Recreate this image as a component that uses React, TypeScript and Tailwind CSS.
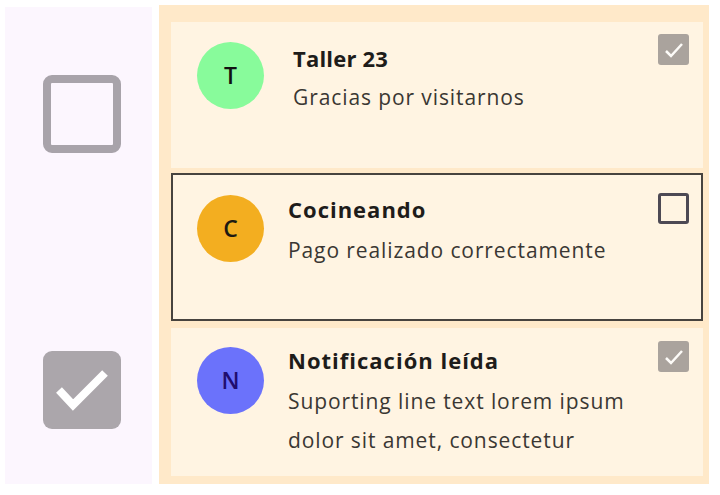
import React from "react";

const font = { fontFamily: '"Open Sans", "Noto Sans", sans-serif' };

function SmallCheck({ checked }: { checked: boolean }) {
  if (checked) {
    return (
      <div className="w-[31px] h-[31px] rounded-[3px] bg-[#aaa39d] flex items-center justify-center shrink-0">
        <svg width="31" height="31" viewBox="0 0 31 31">
          <path d="M8 17 L13 22 L24 10" fill="none" stroke="#fdfbf8" strokeWidth="2.5" />
        </svg>
      </div>
    );
  }
  return <div className="w-[31px] h-[31px] rounded-[3px] border-[3px] border-[#4d4954] shrink-0" />;
}

type Item = {
  letter: string;
  bg: string;
  fg: string;
  title: string;
  lines: string[];
  checked: boolean;
  selected?: boolean;
};

function Card({
  item,
  h,
  textPl,
  pt,
  checkMt,
  titleCls,
}: {
  item: Item;
  h: string;
  textPl: string;
  pt: string;
  checkMt: string;
  titleCls: string;
}) {
  return (
    <div
      className={`${h} bg-[#fff4e2] flex items-start ${pt} ${
        item.selected ? "border-2 border-[#47433e] pl-[24px] pr-[12px]" : "pl-[26px] pr-[14px]"
      }`}
    >
      <div
        className="w-[67px] h-[67px] rounded-full flex items-center justify-center shrink-0 text-[23px] font-semibold"
        style={{ backgroundColor: item.bg, color: item.fg }}
      >
        {item.letter}
      </div>
      <div className={`flex-1 ${textPl} -mt-[4px]`}>
        <div className={`text-[#1e1c1a] leading-[40px] ${titleCls}`}>{item.title}</div>
        {item.lines.map((l) => (
          <div key={l} className="text-[21px] tracking-[0.9px] text-[#3a3733] leading-[39px]">
            {l}
          </div>
        ))}
      </div>
      <div className={checkMt}>
        <SmallCheck checked={item.checked} />
      </div>
    </div>
  );
}

export default function App() {
  const items: Item[] = [
    { letter: "T", bg: "#88fb9b", fg: "#111", title: "Taller 23", lines: ["Gracias por visitarnos"], checked: true },
    { letter: "C", bg: "#f3ae20", fg: "#1d1a12", title: "Cocineando", lines: ["Pago realizado correctamente"], checked: false, selected: true },
    { letter: "N", bg: "#6b72fb", fg: "#200d6e", title: "Notificación leída", lines: ["Suporting line text lorem ipsum", "dolor sit amet, consectetur"], checked: true },
  ];
  return (
    <div className="w-[720px] h-[495px] bg-white flex pl-[5px] pt-[5px] gap-[7px]" style={font}>
      <div className="w-[147px] h-[477px] mt-[2px] bg-[#fcf6fe] flex flex-col pl-[38px] pt-[68px]">
        <div className="w-[78px] h-[78px] rounded-[9px] border-[8px] border-[#a8a3aa]" />
        <div className="w-[78px] h-[78px] rounded-[9px] bg-[#aba6ab] mt-[198px]">
          <svg width="78" height="78" viewBox="0 0 78 78">
            <path d="M16 39 L30 54 L62 22" fill="none" stroke="#ffffff" strokeWidth="8" />
          </svg>
        </div>
      </div>
      <div className="w-[550px] h-[479px] bg-[#ffe9c9] pl-[12px] pr-[6px] pt-[17px] flex flex-col">
        <Card item={items[0]} h="h-[146px]" textPl="pl-[29px]" pt="pt-[20px]" checkMt="-mt-[8px]" titleCls="text-[22px] font-bold tracking-[0.2px]" />
        <div className="h-[5px]" />
        <Card item={items[1]} h="h-[148px]" textPl="pl-[24px]" pt="pt-[20px]" checkMt="-mt-[2px]" titleCls="text-[22px] font-bold tracking-[1px] -mt-[2px] mb-[2px]" />
        <div className="h-[7px]" />
        <Card item={items[2]} h="h-[148px]" textPl="pl-[24px]" pt="pt-[19px]" checkMt="-mt-[6px]" titleCls="text-[22px] font-bold tracking-[1px] -mt-[3px] mb-[2px]" />
      </div>
    </div>
  );
}
